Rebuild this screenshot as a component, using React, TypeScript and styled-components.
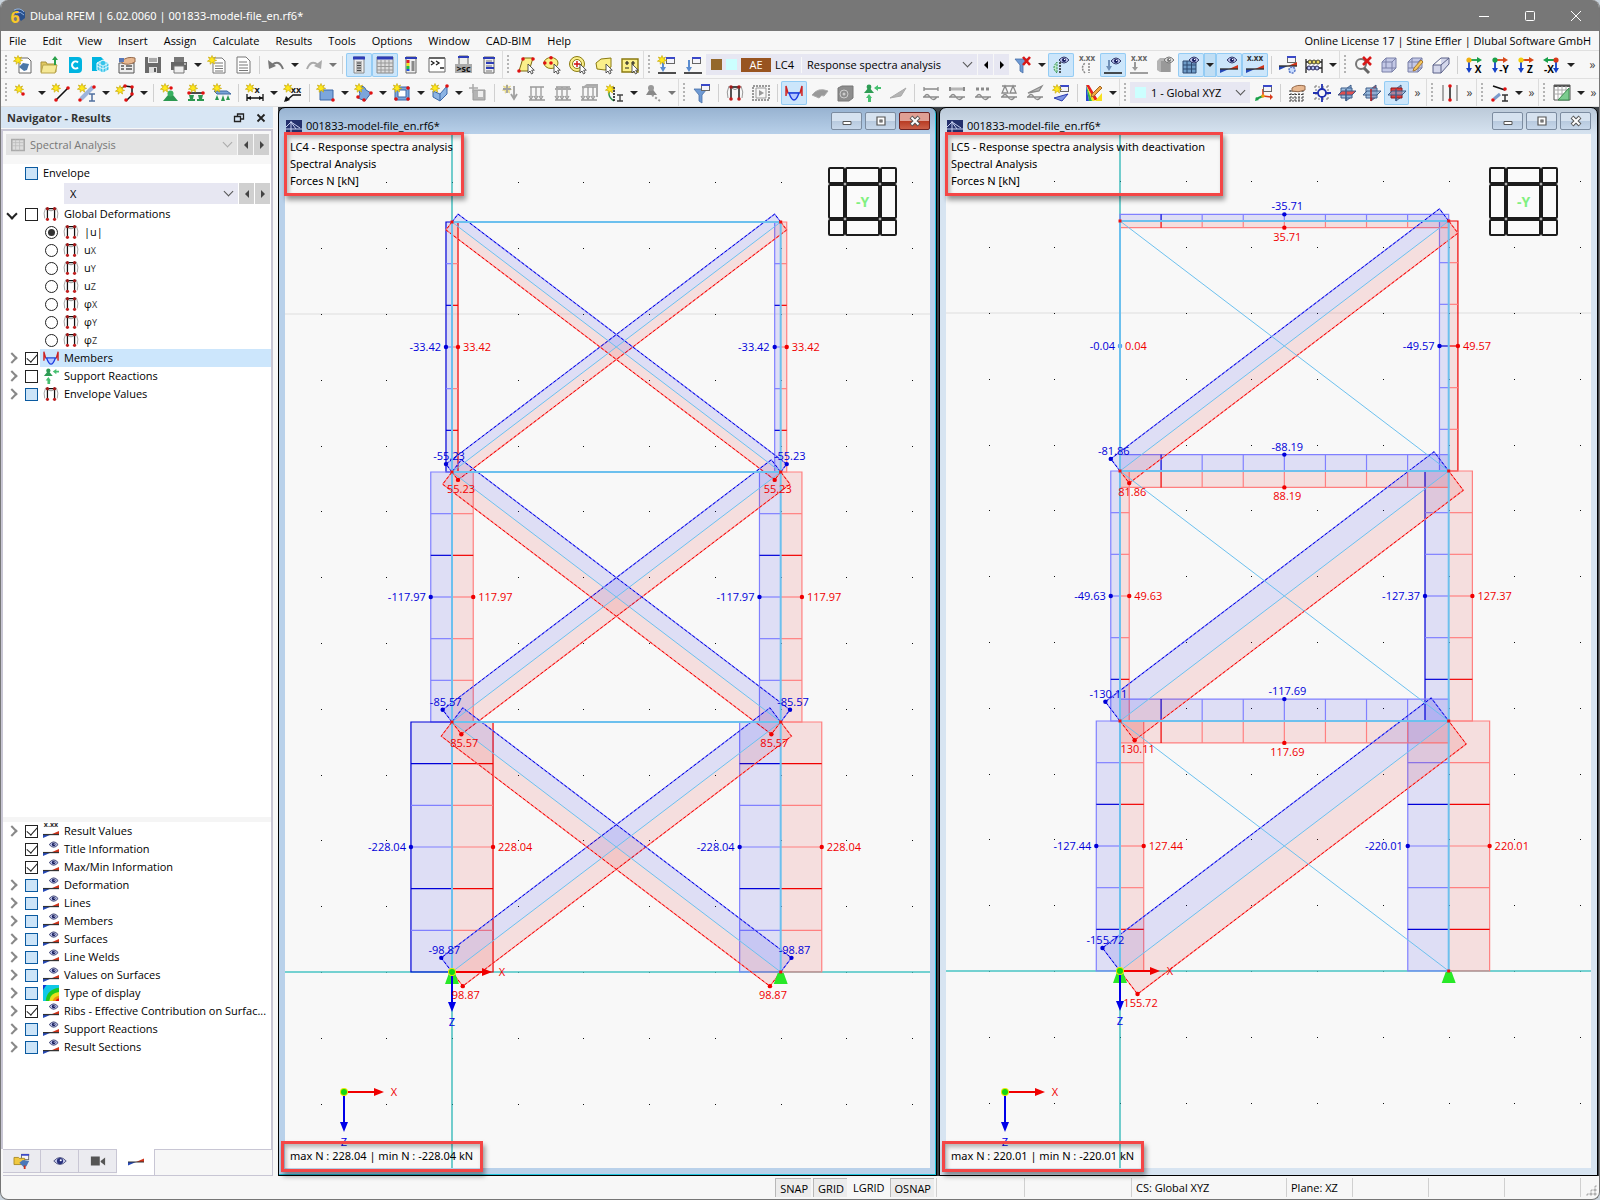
import React, { ReactNode } from "react";
import styled, { createGlobalStyle, css } from "styled-components";

const Global = createGlobalStyle`
  * { box-sizing: border-box; }
  html, body { margin: 0; background: #c9d3dc; }
  body, button, select, input { font-family: "Open Sans", "Noto Sans", sans-serif; font-size: 11px; color: #000; }
  button { border: 0; background: none; padding: 0; }
`;

/* ---------- icon primitives ---------- */

const Star = ({ x = 4, y = 4 }: { x?: number; y?: number }) => (
  <path
    transform={`translate(${x} ${y})`}
    d="M0-4.5L1-1.8 3.6-3 2-.6 4.6.4 1.9 1.3 2.6 4 .2 2.3-1.8 4.2-1.7 1.5-4.6 1.2-2.2-.4-3.6-3-1-1.9z"
    fill="#ffe81a"
    stroke="#c9a90a"
    strokeWidth=".7"
  />
);
const Dot = ({ x, y, c = "#e01010" }: { x: number; y: number; c?: string }) => <circle cx={x} cy={y} r="1.8" fill={c} />;
const Eye = ({ x, y, g }: { x: number; y: number; g?: boolean }) => (
  <g transform={`translate(${x} ${y})`}>
    <path d="M-5 0Q0-6 5 0Q0 6-5 0z" fill={g ? "#ddd" : "#b9bfe8"} stroke={g ? "#777" : "#333a6a"} strokeWidth="1" />
    <circle r="2" fill={g ? "#777" : "#141b5c"} />
    <circle cx=".6" cy="-.6" r=".7" fill="#fff" />
  </g>
);
const Win = ({ x, y }: { x: number; y: number }) => (
  <g transform={`translate(${x} ${y})`}>
    <rect x=".5" y=".5" width="8" height="6" fill="#f4f4fa" stroke="#666" />
    <path d="M0 1h9" stroke="#3a48c8" strokeWidth="2" />
  </g>
);
const Cursor = () => <path d="M11 8v9l2-2 1.5 3 1.6-1-1.4-2.8h2.6z" fill="#fff" stroke="#444" strokeWidth=".9" />;
const Wedge = ({ y = 13 }: { y?: number }) => (
  <g>
    <path d={`M0 ${y}h9L0 ${y + 4}z`} fill="#2448b8" />
    <path d={`M18 ${y}H9L18 ${y - 4}z`} fill="#d0341a" />
    <path d={`M0 ${y}h18`} stroke="#333" strokeWidth="1.4" />
  </g>
);
const XXX = ({ c = "#333" }: { c?: string }) => (
  <text x="9" y="5" textAnchor="middle" fontSize="8" fontWeight="700" fill={c}>x.xx</text>
);
const Cube = ({ c = "#c3c8e6", s = "#7a80a8" }: { c?: string; s?: string }) => (
  <path d="M2 6l4-4h10v10l-4 4H2zM2 6h10v10M12 6l4-4M6 2v10H2M6 12h10" fill={c} stroke={s} strokeWidth="1" />
);
const Plane = ({ k }: { k: number }) => (
  <g strokeWidth="1">
    <path d="M8 5l5-4v12l-5 4z" fill={k === 1 ? "#e04848" : "#9cbce4"} stroke="#3c5c88" />
    <path d="M3 4h11v10H3z" fill={k === 2 ? "#e03c3c" : "#8fb4dccc"} stroke={k === 2 ? "#8c1818" : "#3c5c88"} />
    <path d="M0 11l4-4h14l-4 4z" fill={k === 0 ? "#e05050" : "#8fb4dc99"} stroke="#3c5c88" />
    <path d="M8 5v12" stroke={k === 1 ? "#c01818" : "#3c5c88"} strokeWidth="1.4" />
  </g>
);
const Axis = ({ l, a, b, n, left }: { l: string; a: string; b: string; n: string; left?: boolean }) => (
  <g transform={left ? "translate(9 0)" : undefined}>
    <path d="M4 4v10" stroke="#1440c8" strokeWidth="1.8" />
    <path d="M1 12h6l-3 5z" fill="#1440c8" />
    <path d={left ? "M4 4h-9" : "M4 4h9"} stroke={a} strokeWidth="1.8" />
    <path d={left ? "M-4 1v6l-5-3z" : "M12 1v6l5-3z"} fill={a} />
    <circle cx="4" cy="4" r="2.6" fill={b} />
    <text x={left ? -3 : 13} y="17" textAnchor="middle" fontSize="10" fontWeight="700" fill="#000">{n}{l}</text>
  </g>
);
const Beam = ({ children }: { children?: ReactNode }) => (
  <g stroke="#8a8a8a" strokeWidth="1.3">
    {children}
    <path d="M1 13h16M2 13q3-5 6 0t7 0" />
  </g>
);
const Load = ({ c = "#9a9a9a" }: { c?: string }) => (
  <path d="M3 3v10M8 3v10M13 3v10M2 3h14M1 16h16M1 12l2 3 2-3M6 12l2 3 2-3M11 12l2 3 2-3" stroke={c} strokeWidth="1.3" />
);
const Frame = () => (
  <g>
    <path d="M3 2Q0 8 2 14M15 2q3 6 1 12" stroke="#999" />
    <path d="M5 15V3h8v12" stroke="#111" strokeWidth="1.4" />
    <path d="M5 4q4 3 8 0" stroke="#888" />
    <Dot x={5} y={3} c="#a01818" /><Dot x={13} y={3} c="#a01818" /><Dot x={5} y={15} c="#c02020" /><Dot x={13} y={15} c="#c02020" />
  </g>
);
const Curve = () => (
  <g strokeWidth="1.4">
    <path d="M1 9h16" stroke="#4a86b8" />
    <path d="M1 12V2l2 7M17 12V2l-2 7" stroke="#c22" fill="#e88" />
    <path d="M4 9q5 14 10 0z" stroke="#1c3ce0" fill="#b4c8ff" />
  </g>
);
const Support = () => (
  <g fill="#2e9c54">
    <circle cx="6" cy="3" r="2.4" /><path d="M1 9l5-6 5 6z" />
    <path d="M18 3h-3V1l-4 3 4 3V5h3zM8 18H5v-4H3l3-4 3 4H8z" fill="#46c070" />
  </g>
);
const Funnel = ({ y = 2 }: { y?: number }) => (
  <path d={`M1 ${y + 1}h13l-5 6v8l-3-2v-6z`} fill="#6e9ad4" stroke="#4870a8" strokeWidth=".8" />
);

const icons: Record<string, ReactNode> = {
  "New model": <><path d="M5 2h9l3 3v12H5z" fill="#fff" stroke="#666" /><path d="M5 11l4-4 6 1-2 6-3 1z" fill="#4c78a8" /><Star /></>,
  Open: <><path d="M1 6h5l1 2h9v8H1z" fill="#e0c860" stroke="#a8923a" /><path d="M3 9h14l-2 8H1z" fill="#f5e896" stroke="#b8a44a" /><path d="M14 9V4h-2l3-4 3 4h-2v5z" fill="#28a048" /></>,
  Cloud: <><path d="M3 1h9q4 0 4 4v8q0 4-4 4H3z" fill="#00b4e0" /><path d="M12 6.500a3.500 3.500 0 1 0 0 5" stroke="#fff" strokeWidth="2" /></>,
  "Cloud model": <><path d="M0 1h9l3 3v11H0z" fill="#00b4e0" /><path d="M11 4l6 3v7l-6 3-6-3V7z" fill="#38c4ea" stroke="#fff" /><path d="M5 7l6 3 6-3M11 10v7M8 6v9M14 6v9M5 10l6 3 6-3" stroke="#fff" strokeWidth=".8" /></>,
  "Model settings": <><path d="M1 7h15v10H1z" fill="#eee" stroke="#555" /><path d="M3 10h3M8 10h6M3 13h3M8 13h6" stroke="#555" strokeWidth="1.500" /><path d="M4 5q5-5 13-3v4q-7 4-13 1z" fill="#e8b890" stroke="#94684a" /><path d="M1 2h5v4H1z" fill="#5878b8" /></>,
  Save: <><path d="M1 1h16v16H1z" fill="#6a6a6a" /><path d="M4 1h10v6H4z" fill="#f0f0f0" /><path d="M5 3h8M5 5h8" stroke="#666" /><path d="M5 11h8v6H5z" fill="#ddd" /><path d="M10 12h2v4h-2z" fill="#555" /></>,
  Print: <><path d="M4 1h10v5H4z" fill="#777" /><path d="M1 6h16v8H1z" fill="#666" /><path d="M4 10h10v7H4z" fill="#eee" stroke="#777" /><path d="M14 8h2" stroke="#fff" /></>,
  "New report": <><path d="M5 2h9l3 3v12H5z" fill="#fff" stroke="#777" /><path d="M7 7h8M7 10h8M7 12.500h8M7 15h8" stroke="#777" /><Star /></>,
  Report: <><path d="M3 1h9l4 4v12H3z" fill="#fff" stroke="#777" /><path d="M5 6h8M5 9h9M5 12h9M5 14.500h9" stroke="#777" /></>,
  Undo: <><path d="M5 9q7-6 11 4" stroke="#777" strokeWidth="2" /><path d="M1 4l1 9 7-3z" fill="#777" /></>,
  Redo: <><path d="M13 9Q6 3 2 13" stroke="#aaa" strokeWidth="2" /><path d="M17 4l-1 9-7-3z" fill="#aaa" /></>,
  Navigator: <><path d="M4 1h10v16H4z" fill="#eee" stroke="#888" /><path d="M3 2h12" stroke="#2c3cb8" strokeWidth="3" /><path d="M6 5h6v11H6z" fill="#bbb" /><path d="M7 7h4M7 9.500h4M7 12h4M7 14.500h4" stroke="#444" /></>,
  Tables: <><path d="M1 1h16v16H1z" fill="#ddd" stroke="#888" /><path d="M1 2h16" stroke="#2c3cb8" strokeWidth="3" /><path d="M1 7h16M1 10.500h16M1 14h16M5 4v13M9 4v13M13 4v13" stroke="#999" /></>,
  Panel: <><path d="M4 1h10v16H4z" fill="#eee" stroke="#666" /><path d="M3 2h12" stroke="#2c3cb8" strokeWidth="2" /><path d="M6 4v3" stroke="#e02020" strokeWidth="3" /><path d="M6 7v3" stroke="#f0e020" strokeWidth="3" /><path d="M6 10v3" stroke="#20c040" strokeWidth="3" /><path d="M6 13v2" stroke="#2050e0" strokeWidth="3" /><path d="M11 5v10" stroke="#888" strokeWidth="3" /></>,
  Console: <><path d="M1 2h16v14H1z" fill="#fff" stroke="#666" /><path d="M1 2h16" stroke="#666" strokeWidth="2" /><path d="M3 5l3 2-3 2M8 5l3 2-3 2M12 12h4" stroke="#222" strokeWidth="1.300" /></>,
  Script: <><path d="M5 0h9v9H5z" fill="#eee" stroke="#666" /><path d="M4 1h11" stroke="#2c3cb8" strokeWidth="2" /><path d="M1 8h17v9H1z" fill="#aaa" /><text x="9.500" y="16" textAnchor="middle" fontSize="9" fontWeight="700" fill="#111">&gt;sc</text></>,
  Manager: <><path d="M4 1h10v16H4z" fill="#eee" stroke="#666" /><path d="M3 2h12M6 7h8M6 12h8" stroke="#2c3cb8" strokeWidth="2" /><path d="M6 5h6M6 10h6M6 15h6" stroke="#777" /></>,
  "Select parallelogram": <><path d="M6 2h10l-4 13H2z" fill="#fbf08a" stroke="#7a6a10" /><Dot x={6} y={3} /><Dot x={16} y={3} /><Dot x={2} y={15} /><Cursor /></>,
  "Select ellipse": <><ellipse cx="8" cy="7" rx="7" ry="5.500" fill="#fbf08a" stroke="#8a7a10" /><Dot x={8} y={7} /><Dot x={8} y={1.8} /><Dot x={1.8} y={7} /><Cursor /></>,
  "Select ring": <><circle cx="8" cy="8" r="7.500" fill="#fbf08a" stroke="#8a7a10" /><circle cx="8" cy="8" r="4.500" fill="#fff" stroke="#8a7a10" /><path d="M8 5v6M5 8h6" stroke="#d01010" strokeWidth="1.400" /><Cursor /></>,
  "Select polygon": <><path d="M1 7l5-4 10-1v9l-6 3-8-1z" fill="#fbf08a" stroke="#8a7a10" /><Cursor /></>,
  "Select by number": <><path d="M1 3h16v13H1z" fill="#fbf08a" stroke="#8a7a10" strokeWidth="1.400" /><path d="M4 7h4M6 5v4M4 12h4M12 5v4M10 7h4" stroke="#222" strokeWidth="1.200" /><Cursor /></>,
  "New load case": <><path d="M5 5v9" stroke="#5a8cd0" strokeWidth="2" /><path d="M2 11h6l-3 5z" fill="#5a8cd0" /><path d="M0 17h18" stroke="#222" strokeWidth="1.600" /><Win x={8} y={1} /><Star /></>,
  "Load cases": <><path d="M5 4v10" stroke="#5a8cd0" strokeWidth="2" /><path d="M2 11h6l-3 5z" fill="#5a8cd0" /><path d="M0 17h18" stroke="#222" strokeWidth="1.600" /><Win x={8} y={1} /></>,
  "Clear filter": <><Funnel /><path d="M9 1l7 8M16 1l-7 8" stroke="#d81818" strokeWidth="2.600" /></>,
  "Show supports": <><path d="M5 17Q-1 12 5 6v11" fill="#bfe8c8" stroke="#2a9048" strokeDasharray="2 1" /><path d="M8 6v11" stroke="#222" strokeDasharray="2 1" strokeWidth="1.500" /><Eye x={12} y={4} /></>,
  "Support values": <><XXX c="#666" /><path d="M7 17q-5-5 0-10M11 7v10" stroke="#888" strokeDasharray="2 1" strokeWidth="1.500" /></>,
  "Show loads": <><path d="M5 4v9" stroke="#6f90b8" strokeWidth="2" /><path d="M2 10h6l-3 5z" fill="#6f90b8" /><path d="M0 17h18" stroke="#222" strokeWidth="1.600" /><Eye x={12} y={5} /></>,
  "Load values": <><XXX c="#666" /><path d="M5 6v7" stroke="#999" strokeWidth="2" /><path d="M2 11h6l-3 4z" fill="#999" /><path d="M0 17h18" stroke="#888" strokeWidth="1.600" /></>,
  "Show solids": <><path d="M1 5l3-3h8l3 3v11H4l-3-2z" fill="#b4b4b4" /><path d="M5 5h9v11H5z" fill="#999" /><Eye x={13} y={4} g /></>,
  "Show surfaces": <><path d="M1 5h13v12H1z" fill="#6f9cc8" stroke="#2c4870" /><path d="M1 9h13M1 13h13M5 5v12M9.500 5v12" stroke="#2c4870" /><Eye x={12} y={4} /></>,
  "Show results": <><Wedge /><Eye x={12} y={4} /></>,
  "Result values": <><Wedge /><XXX /></>,
  "Result settings": <><Wedge y={10} /><Win x={8} y={0} /><circle cx="13" cy="14" r="3" fill="#c8dcff" stroke="#5878c8" strokeWidth="1.500" strokeDasharray="2 1" /></>,
  Abacus: <><path d="M1 3v14M17 3v14M1 6h16M1 12h16" stroke="#222" strokeWidth="1.300" /><g fill="#e8d860" stroke="#443"><circle cx="5" cy="6" r="2" /><circle cx="9" cy="6" r="2" /><circle cx="13" cy="6" r="2" /></g><g fill="#b8c4f8" stroke="#225"><circle cx="4" cy="12" r="2" /><circle cx="8" cy="12" r="2" /><circle cx="12" cy="12" r="2" /></g></>,
  "Zoom off": <><circle cx="7" cy="8" r="5" stroke="#777" strokeWidth="2" /><path d="M10 12l5 5" stroke="#666" strokeWidth="3" /><path d="M9 1l8 8M17 1L9 9" stroke="#d81818" strokeWidth="2.600" /></>,
  "View cube": <Cube />,
  "Edit view": <><Cube /><path d="M8 12l7-8 2 2-7 8-3 1z" fill="#f4c860" stroke="#a87830" /></>,
  "Perspective view": <path d="M1 9h8v8H1zM9 2h8v6l-8 9M1 9l8-7M9 9l8-7" fill="#c3c8e6aa" stroke="#5a6088" />,
  "View X": <Axis l="X" n="" a="#18a048" b="#f0b010" />,
  "View -Y": <Axis l="Y" n="-" a="#d84818" b="#18a048" />,
  "View Z": <Axis l="Z" n="" a="#d84818" b="#f0d010" />,
  "View -X": <Axis l="X" n="-" a="#18a048" b="#d83818" left />,
  "New node": <><Star x={5} y={5} /><Dot x={9} y={10} /></>,
  "New line": <><path d="M4 16L16 4" stroke="#111" strokeWidth="1.600" /><Dot x={4} y={16} /><Dot x={16} y={4} /><Star /></>,
  "New member": <><path d="M3 15L15 3" stroke="#9cb4dc" strokeWidth="4" /><path d="M11 10h6M11 17h6M14 10v7" stroke="#5070a0" strokeWidth="1.500" /><Dot x={2} y={16} /><Dot x={16} y={3} /><Star /></>,
  "New member set": <><path d="M3 6l6-4 7 1v8l-6 6" stroke="#111" strokeWidth="1.500" /><Dot x={9} y={2} /><Dot x={16} y={3} /><Dot x={16} y={10} /><Dot x={10} y={16} /><Star x={4} y={6} /></>,
  "New nodal support": <><path d="M2 17l5-6h5l5 6z" fill="#2c9850" /><circle cx="9.500" cy="9.500" r="3" fill="#38b060" /><Dot x={10} y={4} /><Star /></>,
  "New line support": <><path d="M1 9h16" stroke="#111" strokeWidth="1.500" /><path d="M1 17v-2h2l-1-4h5l-1 4h2v2zM10 17v-2h2l-1-4h5l-1 4h2v2z" fill="#2c9850" /><Dot x={2} y={9} /><Dot x={16} y={9} /><Star x={6} /></>,
  "New surface support": <><path d="M1 7h13l4 3H4z" fill="#7aa4d8" stroke="#3c68a0" /><path d="M2 16l2-5 2 5zM8 17l2-6 2 6zM13 16l2-5 2 5z" fill="#2c9850" /><Star /></>,
  "New dimension": <><path d="M1 10v7M17 10v7M1 14h16" stroke="#111" strokeWidth="1.300" /><path d="M1 14l4-2v4zM17 14l-4-2v4z" fill="#111" /><text x="11" y="9" textAnchor="middle" fontSize="9" fontWeight="700" fill="#222">x</text><Star /></>,
  "New annotation": <><path d="M2 17l7-6h8" stroke="#111" strokeWidth="1.300" /><path d="M0 18l2-6 4 4z" fill="#111" /><text x="12" y="9" textAnchor="middle" fontSize="9" fontWeight="700" fill="#222">xx</text><Star /></>,
  "New surface": <><path d="M3 6h13v10H3z" fill="#7ca6dc" stroke="#3c68a8" /><Dot x={16} y={16} /><Star /></>,
  "New curved surface": <><path d="M3 4q6-4 8 2l5 3-6 8-7-3 2-4z" fill="#7ca6dc" stroke="#3c68a8" /><Dot x={3} y={13} /><Dot x={16} y={9} /><Dot x={9} y={16} /><Star /></>,
  "New opening": <><path d="M2 3h14v13H2z" fill="#7ca6dc" stroke="#3c68a8" /><path d="M5 6h8v7H5z" fill="#fff" stroke="#3c68a8" /><Dot x={3} y={15} /><Dot x={15} y={15} /><Dot x={15} y={4} /><Star /></>,
  "New solid": <><path d="M2 7l7 3 7-8v8l-7 7-7-4z" fill="#8cb4e4" stroke="#3c68a8" /><path d="M9 10v7" stroke="#3c68a8" /><Dot x={16} y={2} /><Star /></>,
  "New block": <><path d="M4 6h12v10H4z" fill="#b4b4b4" stroke="#999" /><path d="M9 7h5v6H9z" fill="#eee" /><path d="M0 4h9M4 0v9" stroke="#aaa" strokeWidth="1.500" /></>,
  "Nodal load": <><g opacity=".5"><Star x={5} y={5} /></g><path d="M12 2v11M9 10l3 5 3-5M5 1v8M1 5h8" stroke="#a0a0a0" strokeWidth="1.800" /></>,
  "Member load": <Load />,
  "Line load": <><Load /><path d="M1 5h16" stroke="#aaa" strokeWidth="2" /></>,
  "Surface load": <><Load /><path d="M3 4l5-3 8 3v8" stroke="#aaa" /></>,
  "Solid load": <><Load /><path d="M3 4l4-3h10v12" stroke="#aaa" strokeWidth="2" /></>,
  "New imperfection": <><path d="M6 3q-7 8 2 14" stroke="#2a9048" strokeWidth="1.500" /><path d="M8 3v14" stroke="#111" strokeDasharray="2 1" strokeWidth="1.500" /><path d="M11 11h6M11 17h6M14 11v6" stroke="#444" strokeWidth="1.400" /><Star x={4} y={5} /></>,
  "Support displacement": <><path d="M2 11l5-8 6 8z" fill="#888" /><circle cx="7" cy="4" r="3" fill="#999" /><path d="M8 11l8 6" stroke="#999" strokeDasharray="2 2" strokeWidth="2" /></>,
  "Result filter": <><Funnel y={4} /><Win x={8} y={0} /></>,
  Deformation: <Frame />,
  Animation: <><path d="M1 2h16v14H1z" stroke="#999" strokeWidth="2" strokeDasharray="2 1" /><path d="M4 4h10v10H4z" stroke="#999" /><path d="M7 6l5 3-5 3z" fill="#999" /></>,
  "Member results": <Curve />,
  "Surface results": <path d="M1 11q6-8 16-4l-4 5q-2-2-5 2z" fill="#999" stroke="#aaa" />,
  "Solid results": <><path d="M1 4l4-2h11v12l-4 3H1z" fill="#8d8d8d" stroke="#777" /><circle cx="7" cy="10" r="4" stroke="#ccc" /><circle cx="7" cy="10" r="1.500" fill="#ccc" /></>,
  "Support reactions": <Support />,
  "Result sections": <path d="M1 14L17 4l-5 8z" fill="#b4b4b4" stroke="#aaa" />,
  "Result beam": <Beam><path d="M2 5h14M2 3v4M16 3v4" /></Beam>,
  "Result beam average": <Beam><path d="M2 5h14" strokeWidth="3" opacity=".6" /><path d="M2 3v4M16 3v4" strokeWidth="2" /></Beam>,
  "Result beam points": <Beam><path d="M2 5h14" strokeWidth="3" strokeDasharray="3 2" /></Beam>,
  "Result beam supports": <Beam><path d="M2 2h14M5 2l-3 7h6zM13 2l-3 7h6z" /></Beam>,
  "Result beam wedge": <Beam><path d="M2 9L16 2l-3 5z" fill="#bbb" /></Beam>,
  "New result section": <><path d="M2 14l14-4-6 7z" fill="#7c94e4" stroke="#2c3cb0" /><Win x={8} y={1} /><Star x={5} y={5} /></>,
  Colours: <><path d="M1 1v16h16V8L9 13z" fill="#f8f8f8" /><path d="M1 1h3l9 15H9z" fill="#e82020" /><path d="M1 1l9 16H7z" fill="#f8e020" /><path d="M1 1l6 16H4z" fill="#30b840" /><path d="M1 1l3 16H1z" fill="#2848d0" /><path d="M10 17h7V9z" fill="#f8e020" /><path d="M7 10l8-8 2 2-8 8-3 1z" fill="#f4a840" stroke="#a06828" /></>,
  "Coordinate system": <><path d="M8 12V5M8 12l8 1" stroke="#d83818" strokeWidth="1.600" /><path d="M8 12l-7 3" stroke="#18a048" strokeWidth="2" /><path d="M0 17l1-4 3 3z" fill="#18a048" /><path d="M15 10l3 3-3 3z" fill="#d83818" /><Win x={8} y={1} /><Dot x={8} y={12} c="#f0a010" /></>,
  "Grid settings": <><path d="M1 7h15M1 10.500h15M1 14h15M1 17h15M3 6v12M7 6v12M11 6v12M15 6v12" stroke="#444" strokeDasharray="2 1" /><path d="M4 4q5-4 13-2v4q-7 3-13 1z" fill="#e8b890" stroke="#94684a" /></>,
  "Object snap": <><path d="M1 3h16M1 15h16M3 1v16M15 1v16" stroke="#777" strokeDasharray="2 2" /><circle cx="9" cy="9" r="4" stroke="#2030b0" strokeWidth="1.800" /><path d="M9 0v5M9 13v5M0 9h5M13 9h5" stroke="#2030b0" strokeWidth="1.800" /></>,
  "Work plane XY": <Plane k={0} />,
  "Work plane YZ": <Plane k={1} />,
  "Work plane XZ": <Plane k={2} />,
  "Guide lines": <><path d="M2 1v16M16 1v16" stroke="#888" strokeWidth="1.400" /><path d="M9 2v14" stroke="#111" strokeWidth="1.400" /><Dot x={9} y={2} /><Dot x={9} y={16} /></>,
  "Split member": <><path d="M2 2l12 4" stroke="#111" strokeWidth="1.400" /><Dot x={14} y={5} /><path d="M3 15l6-5" stroke="#7c9ccc" strokeWidth="3" /><Dot x={2} y={16} /><path d="M11 11h6M11 17h6M14 11v6" stroke="#333" strokeWidth="1.500" /></>,
  "Design table": <><path d="M1 1h16v15H1z" fill="#fff" stroke="#555" /><path d="M1 2h16" stroke="#555" strokeWidth="2" /><path d="M1 6h16M1 10h16M5 2v14M9 2v14M13 2v14" stroke="#aaa" /><path d="M16 4v12H5z" fill="#7ccc90" stroke="#3c8c50" /></>,
};

const navIcons: Record<string, ReactNode> = {
  eye: <><Wedge y={13} /><Eye x={12} y={4} /></>,
  xxx: <><Wedge y={13} /><XXX /></>,
  frame: <Frame />,
  curve: <Curve />,
  support: <Support />,
  rainbow: <><path d="M0 0h18v18H0z" fill="#1038d0" /><path d="M4 0h14v18H0V6Q2 2 4 0z" fill="#10c8e8" /><path d="M18 3v15H3Q4 5 18 3z" fill="#20c820" /><path d="M18 8v10H7Q8 9 18 8z" fill="#e8e020" /><path d="M18 12v6h-7q1-5 7-6z" fill="#f09010" /><path d="M18 15v3h-4q1-2 4-3z" fill="#e01010" /></>,
  wedge: <Wedge y={9} />,
  views: <><path d="M1 9q8-9 16 0q-8 9-16 0z" fill="#c4c8ec" stroke="#333a6a" /><circle cx="9" cy="9" r="4" fill="#28307c" /><circle cx="10" cy="8" r="1.300" fill="#fff" /></>,
  camera: <path d="M1 4h10v10H1zM12 9l5-4v9l-5-4z" fill="#555" />,
  data: <><Win x={8} y={1} /><path d="M0 5h5l1 1h6v7H0z" fill="#f0c840" stroke="#a88820" /><path d="M6 11l4-3 7 1-3 6-3 1z" fill="#4c78b8" /><path d="M12 14v4" stroke="#d03018" strokeWidth="2" /></>,
  table: <><path d="M1 2h16v14H1z" fill="#ddd" stroke="#aaa" strokeWidth="2" /><path d="M1 6h16M1 10h16M6 2v14M11 2v14" stroke="#bbb" /></>,
};

const Svg = styled.svg<{ $s?: number }>`
  width: ${(p) => p.$s ?? 18}px;
  height: ${(p) => p.$s ?? 18}px;
  flex: none;
  fill: none;
  overflow: visible;
`;
const Icon = ({ n, s }: { n: string; s?: number }) => (
  <Svg $s={s} viewBox="0 0 18 18" aria-hidden="true">{icons[n] ?? navIcons[n]}</Svg>
);

/* ---------- application shell ---------- */

const Shell = styled.div`
  min-height: 100vh;
  display: flex;
  flex-direction: column;
  background: #f7f7f7;
  border: solid #767676;
  border-width: 0 1px 1px;
  border-radius: 8px;
  overflow: hidden;
`;
const TitleBar = styled.header`
  height: 31px;
  flex: none;
  display: flex;
  align-items: center;
  gap: 4px;
  padding-left: 7px;
  background: #777;
  h1 { margin: 0; flex: 1; font: 400 11px "Noto Sans", sans-serif; color: #fff; white-space: nowrap; }
`;
const Controls = styled.div`
  display: flex;
`;
const SystemButton = styled.button`
  width: 46px;
  height: 31px;
  display: grid;
  place-items: center;
`;
const MenuBar = styled.nav`
  height: 20px;
  flex: none;
  display: flex;
  align-items: center;
  padding-right: 8px;
  border-bottom: 1px solid #e0e0e0;
  white-space: nowrap;
  span { margin-left: auto; }
`;
const MenuItem = styled.button`
  padding: 0 8px;
  line-height: 20px;
`;
const ToolRow = styled.div`
  height: 28px;
  flex: none;
  display: flex;
  align-items: center;
  border-bottom: 1px solid #e0e0e0;
`;
const Tool = styled.button<{ $on?: boolean; $narrow?: boolean }>`
  width: ${(p) => (p.$narrow ? 25 : 26)}px;
  height: 24px;
  flex: none;
  display: grid;
  place-items: center;
  border-radius: 2px;
  ${(p) => p.$on && css`background: #cce6fb; box-shadow: inset 0 0 0 1px #94ccf4;`}
`;
const Drop = styled.button<{ $on?: boolean; $dim?: boolean }>`
  width: 12px;
  height: 24px;
  flex: none;
  display: grid;
  place-items: center;
  ${(p) => p.$on && css`background: #c0def4; box-shadow: inset 0 0 0 1px #94ccf4;`}
  &::after {
    content: "";
    border: solid transparent;
    border-width: 4px 4px 0;
    border-top-color: ${(p) => (p.$dim ? "#777" : "#222")};
  }
`;
const Sep = styled.i`
  width: 7px;
  flex: none;
  height: 18px;
  background: linear-gradient(#d0d0d0, #d0d0d0) center / 1px 100% no-repeat;
`;
const Handle = styled.i<{ $first?: boolean }>`
  width: ${(p) => (p.$first ? 9 : 11)}px;
  flex: none;
  height: 27px;
  padding: 4px 0 0 4px;
  border-left: ${(p) => (p.$first ? 0 : 1)}px solid #dcdcdc;
  &::after {
    content: "";
    display: block;
    width: 2px;
    height: 19px;
    background: repeating-linear-gradient(#b4b4b4 0 2px, transparent 2px 4px);
  }
`;
const More = styled.button<{ $w?: number }>`
  width: ${(p) => p.$w ?? 13}px;
  flex: none;
  margin-left: auto;
  font-size: 12px;
  line-height: 20px;
  color: #444;
`;
const Combo = styled.div<{ $w?: number; $dim?: boolean }>`
  ${(p) => (p.$w ? `width: ${p.$w}px; flex: none;` : "flex: 1; min-width: 0;")}
  height: 21px;
  margin-right: 1px;
  display: flex;
  align-items: center;
  gap: 4px;
  padding-left: 5px;
  background: ${(p) => (p.$dim ? "#e3e3e3" : "#e7e7f2")};
  select {
    flex: 1;
    min-width: 0;
    height: 21px;
    padding: 0 0 0 1px;
    border: 0;
    appearance: none;
    color: ${(p) => (p.$dim ? "#777" : "#000")};
    opacity: 1;
    background: transparent;
  }
  &::after {
    content: "";
    flex: none;
    width: 6px;
    height: 6px;
    margin: 0 6px 4px 0;
    border: solid ${(p) => (p.$dim ? "#aaa" : "#555")};
    border-width: 0 1px 1px 0;
    transform: rotate(45deg);
  }
`;
const Swatch = styled.i<{ $c: string }>`
  width: 11px;
  height: 11px;
  flex: none;
  background: ${(p) => p.$c};
`;
const Tag = styled.span`
  width: 30px;
  line-height: 14px;
  text-align: center;
  color: #fff;
  background: #985420;
`;
const CaseNo = styled.span`
  width: 27px;
  line-height: 16px;
  border-right: 1px solid #f8f8f8;
`;
const Step = styled.button<{ $next?: boolean; $bg?: string; $c?: string }>`
  width: 15px;
  height: 21px;
  flex: none;
  margin-right: 1px;
  display: grid;
  place-items: center;
  background: ${(p) => p.$bg ?? "#e7e7f2"};
  &::after {
    content: "";
    border: solid transparent;
    border-width: 4px;
    ${(p) => (p.$next ? "border-right-width: 0; border-left-color" : "border-left-width: 0; border-right-color")}: ${(p) => p.$c ?? "#000"};
  }
`;

const mainTools = "New model,Open,Cloud,Cloud model,Model settings,Save,Print,v,New report,Report,|,Undo,v,Redo,d,|,*Navigator,*Tables,Panel,Console,Script,Manager,||,Select parallelogram,Select ellipse,Select ring,Select polygon,Select by number,||,New load case,Load cases,@case,Clear filter,v,*Show supports,Support values,*Show loads,Load values,Show solids,*Show surfaces,*v,*Show results,*Result values,|,Result settings,Abacus,v,||,Zoom off,View cube,Edit view,Perspective view,|,View X,View -Y,View Z,View -X,v,>>";
const editTools = "New node,v,New line,New member,v,New member set,v,|,New nodal support,New line support,New surface support,|,New dimension,v,New annotation,|,New surface,v,New curved surface,v,New opening,v,New solid,v,New block,|,Nodal load,Member load,Line load,Solid load,New imperfection,v,Support displacement,d,||,Result filter,|,Deformation,Animation,|,*Member results,Surface results,Solid results,Support reactions,Result sections,|,Result beam,Result beam average,Result beam points,Result beam supports,Result beam wedge,New result section,|,Colours,v,||,@cs,Coordinate system,|,-Grid settings,-Object snap,-Work plane XY,-Work plane YZ,*-Work plane XZ,>>17,||,Guide lines,>>,||,Split member,v,>>,||,Design table,v,>>";

const ToolItem = ({ id }: { id: string }) => {
  if (id === "|") return <Sep />;
  if (id === "||") return <Handle />;
  if (id === "@case")
    return (
      <>
        <Combo $w={271}>
          <Swatch $c="#94682c" /><Swatch $c="#ccffff" /><Tag>AE</Tag><CaseNo>LC4</CaseNo>
          <select aria-label="Load case"><option>Response spectra analysis</option></select>
        </Combo>
        <Step aria-label="Previous load case" /><Step $next aria-label="Next load case" />
      </>
    );
  if (id === "@cs")
    return (
      <Combo $w={120}>
        <Swatch $c="#ccffff" />
        <select aria-label="Coordinate system"><option>1 - Global XYZ</option></select>
      </Combo>
    );
  if (id.startsWith(">>")) return <More $w={id.length > 2 ? Number(id.slice(2)) : undefined} aria-label="More tools">»</More>;
  const on = id.startsWith("*");
  let name = on ? id.slice(1) : id;
  if (name === "v" || name === "d") return <Drop $on={on} $dim={name === "d"} aria-label="Options" />;
  const narrow = name.startsWith("-");
  if (narrow) name = name.slice(1);
  return <Tool $on={on} $narrow={narrow} aria-label={name}><Icon n={name} /></Tool>;
};
const Toolbar = ({ items }: { items: string }) => (
  <ToolRow>
    <Handle $first />
    {items.split(",").map((id, i) => <ToolItem key={i} id={id} />)}
  </ToolRow>
);

/* ---------- navigator ---------- */

const Body = styled.main`
  flex: 1;
  min-height: 0;
  display: flex;
`;
const Navigator = styled.aside`
  width: 272px;
  flex: none;
  margin-right: 5px;
  display: flex;
  flex-direction: column;
`;
const NavHead = styled.div`
  height: 21px;
  flex: none;
  display: flex;
  align-items: center;
  gap: 12px;
  padding: 0 7px 0 6px;
  background: #d8e6f4;
  h2 { margin: 0; flex: 1; font-size: 11px; font-weight: 700; color: #333; }
  button { display: grid; place-items: center; }
`;
const NavBox = styled.div`
  flex: 1;
  margin-top: 1px;
  display: flex;
  flex-direction: column;
  border: 2px solid #c8c6d4;
  border-bottom: 0;
`;
const Pick = styled.div`
  display: flex;
  flex: none;
  height: 33px;
  padding: 3px 1px 0 3px;
`;
const PickX = styled.div`
  display: flex;
  height: 23px;
  padding: 1px 0 0 61px;
`;
const Pane = styled.div<{ $h?: number }>`
  ${(p) => (p.$h ? `flex: 0 0 ${p.$h}px;` : "flex: 1;")}
  background: #fff;
  border-bottom: ${(p) => (p.$h ? "5px solid #f5f5f5" : "0")};
`;
const Row = styled.div<{ $deep?: boolean; $sel?: boolean }>`
  height: 18px;
  display: flex;
  align-items: center;
  padding-left: ${(p) => (p.$deep ? 42 : 4)}px;
  > label {
    flex: 1;
    min-width: 0;
    height: 18px;
    display: flex;
    align-items: center;
    gap: 5px;
    padding-left: 3px;
    margin-left: 2px;
    background: ${(p) => (p.$sel ? "#cce6fc" : "none")};
  }
  > label > span { white-space: nowrap; line-height: 18px; }
  sub { font-size: 9px; vertical-align: baseline; color: #333; }
`;
const Twist = styled.button<{ $open?: boolean; $none?: boolean }>`
  width: 10px;
  height: 14px;
  margin-right: 8px;
  flex: none;
  display: grid;
  place-items: center;
  visibility: ${(p) => (p.$none ? "hidden" : "visible")};
  &::after {
    content: "";
    width: 6px;
    height: 6px;
    border: solid ${(p) => (p.$open ? "#222" : "#888")};
    border-width: 0 2px 2px 0;
    transform: rotate(${(p) => (p.$open ? 45 : -45)}deg);
  }
`;
const Check = styled.input<{ $partial?: boolean }>`
  appearance: none;
  width: 13px;
  height: 13px;
  flex: none;
  margin: 0;
  border: 1px solid ${(p) => (p.$partial ? "#0a5aa0" : "#222")};
  background: ${(p) => (p.$partial ? "#cce4f8" : "#fff")};
  display: grid;
  place-items: center;
  &:checked::after {
    content: "";
    width: 9px;
    height: 5px;
    margin-bottom: 3px;
    border: solid #222;
    border-width: 0 0 1px 1px;
    transform: rotate(-48deg);
  }
`;
const Radio = styled.input`
  appearance: none;
  width: 13px;
  height: 13px;
  flex: none;
  margin: 0;
  border: 1px solid #222;
  border-radius: 50%;
  display: grid;
  place-items: center;
  &:checked::after { content: ""; width: 7px; height: 7px; border-radius: 50%; background: #333; }
`;
const Tabs = styled.div`
  height: 27px;
  flex: none;
  display: flex;
  margin-left: 2px;
  border: solid #c8c6d4;
  border-width: 0 1px 1px 0;
`;
const Tab = styled.button<{ $on?: boolean }>`
  width: 38px;
  height: ${(p) => (p.$on ? 26 : 24)}px;
  border: solid #c8c6d4;
  border-width: ${(p) => (p.$on ? "0 1px 0 0" : "1px 1px 1px 0")};
  background: ${(p) => (p.$on ? "#fff" : "#ebebf0")};
  display: grid;
  place-items: center;
`;
const TabRest = styled.div`
  flex: 1;
  border-top: 1px solid #c8c6d4;
`;

type Item = { t: string; icon: string; tw?: 0 | 1 | 2; on?: boolean; part?: boolean; sel?: boolean };
const upper: Item[] = [
  { t: "Members", icon: "curve", tw: 1, on: true, sel: true },
  { t: "Support Reactions", icon: "support", tw: 1 },
  { t: "Envelope Values", icon: "frame", tw: 1, part: true },
];
const lower: Item[] = [
  { t: "Result Values", icon: "xxx", tw: 1, on: true },
  { t: "Title Information", icon: "eye", on: true },
  { t: "Max/Min Information", icon: "eye", on: true },
  { t: "Deformation", icon: "eye", tw: 1, part: true },
  { t: "Lines", icon: "eye", tw: 1, part: true },
  { t: "Members", icon: "eye", tw: 1, part: true },
  { t: "Surfaces", icon: "eye", tw: 1, part: true },
  { t: "Line Welds", icon: "eye", tw: 1, part: true },
  { t: "Values on Surfaces", icon: "eye", tw: 1, part: true },
  { t: "Type of display", icon: "rainbow", tw: 1, part: true },
  { t: "Ribs - Effective Contribution on Surfac...", icon: "eye", tw: 1, on: true },
  { t: "Support Reactions", icon: "eye", tw: 1, part: true },
  { t: "Result Sections", icon: "eye", tw: 1, part: true },
];
const deformations: [string, string][] = [["|u|", ""], ["u", "X"], ["u", "Y"], ["u", "Z"], ["φ", "X"], ["φ", "Y"], ["φ", "Z"]];

const TreeRow = ({ it, id }: { it: Item; id: string }) => (
  <Row $sel={it.sel}>
    <Twist $none={!it.tw} $open={it.tw === 2} aria-label={`Expand ${it.t}`} />
    <Check type="checkbox" id={id} defaultChecked={it.on} $partial={it.part} />
    <label htmlFor={id}><Icon n={it.icon} s={16} /><span>{it.t}</span></label>
  </Row>
);

const NavPanel = () => (
  <Navigator>
    <NavHead>
      <h2>Navigator - Results</h2>
      <button aria-label="Float"><Svg $s={10} viewBox="0 0 10 10"><path d="M3.500 3V1h6v5H7M.5 3.500h6v5h-6z" stroke="#222" strokeWidth="1.300" /></Svg></button>
      <button aria-label="Close"><Svg $s={10} viewBox="0 0 10 10"><path d="M1.500 1.500l7 7M8.500 1.500l-7 7" stroke="#222" strokeWidth="1.800" /></Svg></button>
    </NavHead>
    <NavBox>
      <Pick>
        <Combo $dim>
          <Icon n="table" s={14} />
          <select aria-label="Analysis" disabled><option>Spectral Analysis</option></select>
        </Combo>
        <Step $bg="#d0d0d0" $c="#444" aria-label="Previous analysis" /><Step $next $bg="#d0d0d0" $c="#444" aria-label="Next analysis" />
      </Pick>
      <Pane $h={658}>
        <Row>
          <Twist $none aria-label="Expand Envelope" />
          <Check type="checkbox" id="envelope" $partial />
          <label htmlFor="envelope"><span>Envelope</span></label>
        </Row>
        <PickX>
          <Combo><select aria-label="Direction"><option>X</option></select></Combo>
          <Step $bg="#d0d0d0" $c="#444" aria-label="Previous direction" /><Step $next $bg="#d0d0d0" $c="#444" aria-label="Next direction" />
        </PickX>
        <TreeRow it={{ t: "Global Deformations", icon: "frame", tw: 2 }} id="global" />
        {deformations.map(([a, b], i) => (
          <Row key={a + b} $deep>
            <Radio type="radio" name="deformation" id={`def${i}`} defaultChecked={i === 0} />
            <label htmlFor={`def${i}`}><Icon n="frame" s={16} /><span>{a}<sub>{b}</sub></span></label>
          </Row>
        ))}
        {upper.map((it, i) => <TreeRow key={i} it={it} id={`up${i}`} />)}
      </Pane>
      <Pane>
        {lower.map((it, i) => <TreeRow key={i} it={it} id={`low${i}`} />)}
      </Pane>
    </NavBox>
    <Tabs>
      <Tab aria-label="Data"><Icon n="data" s={16} /></Tab>
      <Tab aria-label="Display"><Icon n="views" s={14} /></Tab>
      <Tab aria-label="Views"><Icon n="camera" s={16} /></Tab>
      <Tab $on aria-label="Results"><Icon n="wedge" s={16} /></Tab>
      <TabRest />
    </Tabs>
  </Navigator>
);

/* ---------- model windows ---------- */

const Desk = styled.section`
  flex: 1;
  min-width: 0;
  display: flex;
  gap: 2px;
  padding-right: 1px;
  background: #3a3f44;
`;
const Doc = styled.article<{ $active?: boolean }>`
  flex: 1;
  min-width: 0;
  display: flex;
  flex-direction: column;
  padding: 0 6px 7px;
  border: 1px solid #000;
  border-radius: 7px 7px 0 0;
  background: ${(p) => (p.$active ? "linear-gradient(#98b3d1, #b9d1ea 27px)" : "linear-gradient(#bccad9, #d7e4f1 27px)")};
  box-shadow: ${(p) => (p.$active ? "inset -1px -1px #20c4dc" : "none")};
`;
const DocBar = styled.div`
  height: 26px;
  flex: none;
  display: flex;
  align-items: center;
  gap: 3px;
  padding-left: 1px;
  span { flex: 1; padding: 9px 0 0 1px; line-height: 18px; white-space: nowrap; }
  > svg { width: 16px; height: 12px; margin-top: 9px; }
`;
const DocButton = styled.button<{ $close?: boolean }>`
  width: 31px;
  height: 18px;
  flex: none;
  display: grid;
  place-items: center;
  border: 1px solid ${(p) => (p.$close ? "#6c2424" : "#7c8ca0")};
  border-radius: 2px;
  background: ${(p) => (p.$close ? "linear-gradient(#e0a094 48%, #b83c24 52%, #cc6048)" : "linear-gradient(#d6e2ef 48%, #b8cadf 52%, #c8d8ea)")};
`;
const Canvas = styled.div`
  flex: 1;
  min-height: 0;
  position: relative;
  background: #f8f8f8;
  color: #000;
`;
const Plot = styled.svg`
  position: absolute;
  inset: 0;
  width: 100%;
  height: 100%;
  font-size: 11px;
  fill: none;
`;
const Corner = styled.svg`
  position: absolute;
  left: 40px;
  bottom: 20px;
  width: 90px;
  height: 70px;
  font-size: 11px;
`;
const ViewCube = styled.div`
  position: absolute;
  top: 33px;
  right: 33px;
  display: grid;
  grid-template-columns: 17px 35px 17px;
  grid-template-rows: 17px 35px 17px;
  i { border: 2px solid #1c1c1c; border-radius: 2px; background: #fafafa; }
  strong {
    position: absolute;
    inset: 0;
    display: grid;
    place-items: center;
    font-size: 14px;
    color: #80f080;
  }
`;
const Callout = styled.div<{ $w: number; $bottom?: boolean }>`
  position: absolute;
  left: ${(p) => (p.$bottom ? -4 : -1)}px;
  ${(p) => (p.$bottom ? "bottom: -4px;" : "top: -2px;")}
  width: ${(p) => p.$w}px;
  padding: ${(p) => (p.$bottom ? "3px 0 5px 6px" : "3px 0 4px 3px")};
  border: 3px solid #f44646;
  box-shadow: 2px 4px 5px #0006, inset 2px 3px 4px #0004;
  font-family: "Noto Sans", sans-serif;
  line-height: 17px;
  white-space: nowrap;
  p { margin: 0; }
`;

const BLUE = "#0000d8";
const RED = "#f00000";
const W = 328.7;
const H = 250;

type Pt = [number, number];
/* marks: the stations drawn in full colour */
type Force = { a: Pt; b: Pt; v: number; end?: boolean; dark?: "both" | "blue" | "red"; marks: number[] };

/* One member's axial force, mirrored on both sides of its axis. */
const ForceBand = ({ f, scale }: { f: Force; scale: number }) => {
  const { a, b, v } = f;
  const dx = b[0] - a[0];
  const dy = b[1] - a[1];
  const len = Math.hypot(dx, dy);
  const slanted = dx !== 0 && dy !== 0;
  let nx = dy / len;
  let ny = -dx / len;
  if (dx === 0) { nx = -1; ny = 0; }
  else if (dy === 0) { nx = 0; ny = -1; }
  else if (ny > 0) { nx = -nx; ny = -ny; }
  const w = v * scale;
  const n = slanted ? 0 : dx === 0 ? 6 : 8;
  const sides = [{ s: 1, c: BLUE, fill: "#0000e0", light: "#8080ff" }, { s: -1, c: RED, fill: "#e00000", light: "#ff8080" }];
  const mid: Pt = f.end ? a : [(a[0] + b[0]) / 2, (a[1] + b[1]) / 2];
  return (
    <g>
      {sides.map(({ s, c, fill, light }) => {
        const ox = nx * w * s;
        const oy = ny * w * s;
        const d = `M${a[0]} ${a[1]}L${a[0] + ox} ${a[1] + oy}L${b[0] + ox} ${b[1] + oy}L${b[0]} ${b[1]}`;
        const solid = f.dark === "both" || f.dark === (s === 1 ? "blue" : "red");
        return (
          <g key={s}>
            <path d={d} fill={fill} fillOpacity=".1" />
            <path d={d} stroke={solid ? c : light} strokeWidth="1.200" />
            {slanted && <path d={d} stroke={c} strokeWidth="1" strokeDasharray="3 2" />}
            {Array.from({ length: Math.max(n - 1, 0) }, (_, i) => {
              const t = (i + 1) / n;
              const x = a[0] + dx * t;
              const y = a[1] + dy * t;
              return <path key={i} d={`M${x} ${y}l${ox} ${oy}`} stroke={f.marks.includes(i) ? c : light} strokeWidth="1.200" />;
            })}
            <circle cx={mid[0] + ox} cy={mid[1] + oy} r="2.200" fill={v < 1 ? "#5aa0f0" : c} />
          </g>
        );
      })}
    </g>
  );
};

const ForceLabel = ({ f, scale }: { f: Force; scale: number }) => {
  const { a, b, v } = f;
  const w = v * scale;
  const t = v.toFixed(2);
  if (a[0] === b[0]) {
    const y = (a[1] + b[1]) / 2 + 4;
    return (
      <g>
        <text x={a[0] - w - 5} y={y} textAnchor="end" fill={BLUE}>-{t}</text>
        <text x={a[0] + w + 5} y={y} fill={RED}>{t}</text>
      </g>
    );
  }
  const flat = a[1] === b[1];
  const len = Math.hypot(b[0] - a[0], b[1] - a[1]);
  const px = flat ? 0 : (Math.sign(b[0] - a[0]) * (H / len)) * w;
  const py = flat ? w : (W / len) * w;
  const cx = flat ? (a[0] + b[0]) / 2 : a[0];
  return (
    <g textAnchor="middle">
      <text x={cx - px + 3} y={a[1] - py - 4} fill={BLUE}>-{t}</text>
      <text x={cx + px + 3} y={a[1] + py + 13} fill={RED}>{t}</text>
    </g>
  );
};

const AxisCross = ({ x, y }: { x: number; y: number }) => (
  <g transform={`translate(${x} ${y})`}>
    <path d="M0 0h32" stroke="#f00000" strokeWidth="2" />
    <path d="M30-4l10 4-10 4z" fill="#f00000" />
    <path d="M0 0v32" stroke="#0000e8" strokeWidth="2" />
    <path d="M-4 30h8l-4 10z" fill="#0000e8" />
    <circle r="4" fill="#e8e800" />
    <circle r="3" fill="#10d810" />
    <text x="50" y="4" textAnchor="middle" fill="#f00000">X</text>
    <text y="54" textAnchor="middle" fill="#0000e8">Z</text>
  </g>
);

type Model = { x: number; y: number; scale: number; forces: Force[] };

const ModelPlot = ({ m }: { m: Model }) => {
  const { x, y } = m;
  const nodes: Pt[] = [3, 2, 1, 0].flatMap((k) => [[x, y - k * H], [x + W, y - k * H]] as Pt[]);
  const dots: Pt[] = [];
  for (let i = -6; i <= 20; i++) for (let j = -12; j <= 2; j++) dots.push([x + i * 65.7, y + j * 65.8]);
  return (
    <Plot>
      <path d={`M0 ${y - 658}H2600`} stroke="#dedede" />
      {dots.filter((d) => d[0] > 0 && d[1] > 40).map((d, i) => (
        <rect key={i} x={Math.round(d[0])} y={Math.round(d[1])} width="1" height="1" fill="#111" />
      ))}
      <path d={`M0 ${y}H2600`} stroke="#48c4c4" strokeWidth="1.500" />
      <path d={`M${x} 0V2000`} stroke="#18b0b0" strokeWidth="1.200" />
      {m.forces.map((f, i) => <ForceBand key={i} f={f} scale={m.scale} />)}
      {[0, 1, 2].map((k) => (
        <g key={k} stroke="#6cc0ee">
          <path d={`M${x} ${y - k * H}l${W} ${-H}M${x + W} ${y - k * H}l${-W} ${-H}`} strokeWidth="1" />
          <path d={`M${x} ${y - (k + 1) * H}h${W}`} strokeWidth="2" />
        </g>
      ))}
      <path d={`M${x} ${y}v${-3 * H}M${x + W} ${y}v${-3 * H}`} stroke="#6cc0ee" strokeWidth="2" />
      {[x, x + W].map((sx) => <path key={sx} d={`M${sx - 3} ${y + 1}h6l4 11h-14z`} fill="#28e828" />)}
      {nodes.map(([nx, ny], i) => <rect key={i} x={nx - 1.5} y={ny - 1.5} width="3" height="3" fill="#f01010" />)}
      <AxisCross x={x} y={y} />
      {m.forces.map((f, i) => <ForceLabel key={i} f={f} scale={m.scale} />)}
    </Plot>
  );
};

const column = (x: number, y: number, k: number, right: boolean, v: number, marks: number[], dark?: Force["dark"]): Force => {
  const cx = right ? x + W : x;
  return { a: [cx, y - (k + 1) * H], b: [cx, y - k * H], v, marks, dark };
};
const brace = (x: number, y: number, k: number, right: boolean, v: number): Force => ({
  a: [right ? x + W : x, y - k * H],
  b: [right ? x : x + W, y - (k + 1) * H],
  v,
  end: true,
  marks: [],
});
const beam = (x: number, y: number, k: number, v: number): Force => ({ a: [x, y - k * H], b: [x + W, y - k * H], v, marks: [0] });

const L: Pt = [167, 838];
const R: Pt = [174, 837];
const fullModel: Model = {
  x: L[0], y: L[1], scale: 0.18,
  forces: [
    column(...L, 2, false, 33.42, [1, 4], "both"), column(...L, 2, true, 33.42, [1, 4]),
    column(...L, 1, false, 117.97, [1]), column(...L, 1, true, 117.97, [1]),
    column(...L, 0, false, 228.04, [0, 3], "both"), column(...L, 0, true, 228.04, [0, 3]),
    brace(...L, 2, false, 55.23), brace(...L, 2, true, 55.23),
    brace(...L, 1, false, 85.57), brace(...L, 1, true, 85.57),
    brace(...L, 0, false, 98.87), brace(...L, 0, true, 98.87),
  ],
};
const reducedModel: Model = {
  x: R[0], y: R[1], scale: 0.186,
  forces: [
    column(...R, 2, false, 0.04, []), column(...R, 2, true, 49.57, [2], "red"),
    column(...R, 1, false, 49.63, [4]), column(...R, 1, true, 127.37, [4], "blue"),
    column(...R, 0, false, 127.44, [1, 4]), column(...R, 0, true, 220.01, [1, 4]),
    beam(...R, 3, 35.71), beam(...R, 2, 88.19), beam(...R, 1, 117.69),
    brace(...R, 2, false, 81.86), brace(...R, 1, false, 130.11), brace(...R, 0, false, 155.72),
  ],
};

const ModelWindow = ({ m, active, title, w, wb, minmax }: { m: Model; active?: boolean; title: string; w: number; wb: number; minmax: string }) => (
  <Doc $active={active}>
    <DocBar>
      <svg viewBox="0 0 16 12"><path d="M0 0h16v12H0z" fill="#24306c" /><path d="M0 9h16M5 1v11M5 2l-5 5M5 2l9 6M5 2l5 7" stroke="#c8d0f0" fill="none" /></svg>
      <span>001833-model-file_en.rf6*</span>
      <DocButton aria-label="Minimize"><Svg $s={12} viewBox="0 0 12 12"><path d="M2 6.500h8v3H2z" fill="#fff" stroke="#555" /></Svg></DocButton>
      <DocButton aria-label="Maximize"><Svg $s={12} viewBox="0 0 12 12"><path d="M2 2h8v8H2zM5 5h2v2H5z" fill="#fff" stroke="#555" strokeWidth="1.200" /></Svg></DocButton>
      <DocButton $close={active} aria-label="Close"><Svg $s={12} viewBox="0 0 12 12"><path d="M2 2l8 8M10 2l-8 8" stroke="#555" strokeWidth="4" /><path d="M2.500 2.500l7 7M9.500 2.500l-7 7" stroke="#fff" strokeWidth="2" /></Svg></DocButton>
    </DocBar>
    <Canvas>
      <ModelPlot m={m} />
      <Corner><AxisCross x={19} y={14} /></Corner>
      <ViewCube>{Array.from({ length: 9 }, (_, i) => <i key={i} />)}<strong>-Y</strong></ViewCube>
      <Callout $w={w}><p>{title}</p><p>Spectral Analysis</p><p>Forces N [kN]</p></Callout>
      <Callout $bottom $w={wb}><p>{minmax}</p></Callout>
    </Canvas>
  </Doc>
);

/* ---------- status bar ---------- */

const StatusBar = styled.footer`
  height: 23px;
  flex: none;
  display: flex;
  justify-content: flex-end;
  align-items: center;
`;
const Mode = styled.button<{ $on?: boolean }>`
  height: 19px;
  padding: 0 3px 0 4px;
  margin-right: 2px;
  border: solid #b8b8b8;
  border-width: ${(p) => (p.$on ? "1px 0 0 1px" : "0")};
  background: ${(p) => (p.$on ? "#ececec" : "none")};
`;
const Cell = styled.div<{ $w: number }>`
  width: ${(p) => p.$w}px;
  height: 19px;
  line-height: 20px;
  padding-left: 4px;
  border-left: 1px solid #d0d0d0;
`;
const Grip = styled.i`
  display: block;
  width: 12px;
  height: 12px;
  margin-top: 6px;
  background: radial-gradient(circle, #b0b0b0 1px, transparent 2px) 0 0 / 4px 4px;
  clip-path: polygon(100% 0, 100% 100%, 0 100%);
`;

const menus = ["File", "Edit", "View", "Insert", "Assign", "Calculate", "Results", "Tools", "Options", "Window", "CAD-BIM", "Help"];

export default function App() {
  return (
    <Shell>
      <Global />
      <TitleBar>
        <Svg viewBox="0 0 18 18">
          <path d="M5 5q5-5 12 0v6l-4 3" fill="#28508c" />
          <path d="M6 3q6-3 10 2M8 6q5-2 8 2" stroke="#8cb0e0" />
          <text x="7" y="16" textAnchor="middle" fontSize="16" fontWeight="700" fill="#f8c828">6</text>
        </Svg>
        <h1>Dlubal RFEM | 6.02.0060 | 001833-model-file_en.rf6*</h1>
        <Controls>
          <SystemButton aria-label="Minimize"><Svg $s={10} viewBox="0 0 10 10"><path d="M0 5.500h10" stroke="#fff" /></Svg></SystemButton>
          <SystemButton aria-label="Maximize"><Svg $s={10} viewBox="0 0 10 10"><rect x=".5" y=".5" width="9" height="9" rx="1" stroke="#fff" /></Svg></SystemButton>
          <SystemButton aria-label="Close"><Svg $s={10} viewBox="0 0 10 10"><path d="M0 0l10 10M10 0L0 10" stroke="#fff" /></Svg></SystemButton>
        </Controls>
      </TitleBar>
      <MenuBar>
        {menus.map((t) => <MenuItem key={t}>{t}</MenuItem>)}
        <span>Online License 17 | Stine Effler | Dlubal Software GmbH</span>
      </MenuBar>
      <Toolbar items={mainTools} />
      <Toolbar items={editTools} />
      <Body>
        <NavPanel />
        <Desk>
          <ModelWindow m={fullModel} active title="LC4 - Response spectra analysis" w={180} wb={202} minmax="max N : 228.04 | min N : -228.04 kN" />
          <ModelWindow m={reducedModel} title="LC5 - Response spectra analysis with deactivation" w={278} wb={202} minmax="max N : 220.01 | min N : -220.01 kN" />
        </Desk>
      </Body>
      <StatusBar>
        <Mode $on>SNAP</Mode><Mode $on>GRID</Mode><Mode>LGRID</Mode><Mode $on>OSNAP</Mode>
        <Cell $w={88} /><Cell $w={107} /><Cell $w={155}>CS: Global XYZ</Cell><Cell $w={66}>Plane: XZ</Cell>
        <Cell $w={76} /><Cell $w={76} /><Cell $w={76} /><Cell $w={19}><Grip /></Cell>
      </StatusBar>
    </Shell>
  );
}
